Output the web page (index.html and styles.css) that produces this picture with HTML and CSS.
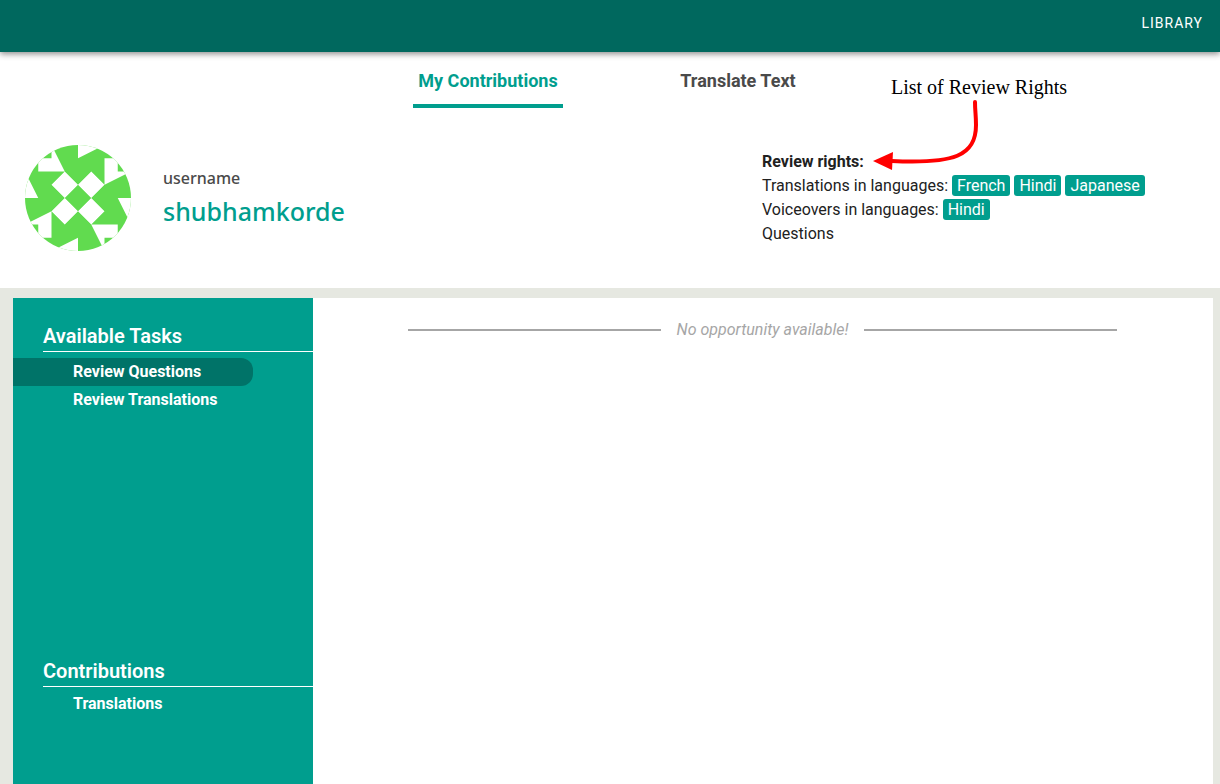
FILE: index.html
```html
<!DOCTYPE html>
<html lang="en">
<head>
<meta charset="utf-8">
<title>Contributor Dashboard</title>
<link rel="stylesheet" href="styles.css">
</head>
<body>
<header class="navbar"><a class="nav-link" href="#">LIBRARY</a></header>
<section class="top">
  <nav class="tabs">
    <button class="tab tab-active" type="button">My Contributions</button>
    <button class="tab" type="button">Translate Text</button>
  </nav>
  <div class="profile">
    <svg class="avatar" viewBox="0 0 16 16" role="img" aria-label="Profile picture">
      <defs><clipPath id="disc"><circle cx="8" cy="8" r="8"/></clipPath></defs>
      <g clip-path="url(#disc)">
        <path fill="#61db4f" d="M0 0H16V16H0Z"/>
        <path fill="#fff" d="M2 2H4V4H2ZM12 2H14V4H12ZM12 12H14V14H12ZM2 12H4V14H2ZM4 0L6 4H4ZM8 0V2L12 0ZM16 4L12 6V4ZM16 8H14L16 12ZM12 16L10 12H12ZM8 16V14L4 16ZM0 12L4 10V12ZM0 8H2L0 4ZM6 4L8 6L6 8L4 6ZM10 4L12 6L10 8L8 6ZM6 8L8 10L6 12L4 10ZM10 8L12 10L10 12L8 10Z"/>
      </g>
    </svg>
    <div class="identity">
      <span class="label">username</span>
      <h1 class="name">shubhamkorde</h1>
    </div>
    <div class="rights">
      <strong>Review rights:</strong>
      <div>Translations in languages: <span class="tag">French</span> <span class="tag">Hindi</span> <span class="tag">Japanese</span></div>
      <div>Voiceovers in languages: <span class="tag">Hindi</span></div>
      <div>Questions</div>
      <div class="note">
        <span class="note-text">List of Review Rights</span>
        <svg class="arrow" viewBox="0 0 108 74" aria-hidden="true">
          <path d="M102 3C102 12 103 16 103 26C103 57 81 65 19 62" fill="none" stroke="#f00" stroke-width="4" stroke-linecap="round"/>
          <path d="M0 62L20 53L19 71Z" fill="#f00"/>
        </svg>
      </div>
    </div>
  </div>
</section>
<main class="board">
  <aside class="sidebar">
    <section class="group">
      <h2 class="group-title">Available Tasks</h2>
      <button class="task task-active" type="button">Review Questions</button>
      <button class="task" type="button">Review Translations</button>
    </section>
    <section class="group">
      <h2 class="group-title">Contributions</h2>
      <button class="task" type="button">Translations</button>
    </section>
  </aside>
  <section class="content">
    <p class="empty">No opportunity available!</p>
  </section>
</main>
</body>
</html>
```
FILE: styles.css
```css
* { box-sizing: border-box; }
body {
  margin: 0;
  min-height: 100vh;
  display: flex;
  flex-direction: column;
  background: #e6e8e1;
  color: #212121;
  font: 16px/24px Roboto, sans-serif;
}
button { border: 0; background: none; font: inherit; cursor: pointer; }
.navbar {
  position: relative;
  display: flex;
  justify-content: flex-end;
  height: 52px;
  padding: 11px 17px;
  background: #00685e;
  box-shadow: 0 2px 6px rgba(0, 0, 0, 0.45);
}
.nav-link {
  color: #fff;
  font-size: 14px;
  letter-spacing: 1px;
  text-decoration: none;
}
.top { padding: 0 8px 24px 12px; background: #fff; }
.tabs { display: flex; justify-content: center; gap: 100px; padding-left: 2px; }
.tab {
  width: 150px;
  height: 56px;
  padding: 6px 0 0;
  border-bottom: 4px solid transparent;
  color: #4a4a4a;
  font-size: 18px;
  font-weight: 700;
  white-space: nowrap;
}
.tab-active { border-color: #009e8e; color: #009e8e; }
.profile {
  display: grid;
  grid-template-columns: 106px 1fr 450px;
  column-gap: 32px;
  padding: 37px 0 0 13px;
}
.avatar { width: 106px; height: 106px; }
.identity { padding-top: 21px; }
.label { color: #4a4a4a; font: 500 16px/24px "Noto Sans", sans-serif; }
.name {
  margin: 2px 0 0;
  color: #009e8e;
  font: 500 25px/36px "Noto Sans", sans-serif;
}
.rights { position: relative; padding: 5px 0 18px; }
.tag {
  padding: 1px 5px;
  border-radius: 3px;
  background: #009e8e;
  color: #fff;
}
.note { position: absolute; top: -70px; left: 111px; }
.note-text {
  display: block;
  padding-left: 18px;
  color: #000;
  font: 20px/24px "Liberation Serif", serif;
  white-space: nowrap;
}
.arrow { display: block; width: 108px; height: 74px; }
.board { flex: 1; display: flex; padding: 10px 7px 0 13px; }
.sidebar { width: 300px; padding-top: 24px; background: #009e8e; color: #fff; }
.group { min-height: 335px; }
.group + .group { min-height: 120px; }
.group-title {
  margin: 0 0 6px 30px;
  padding-bottom: 1px;
  border-bottom: 1px solid #fff;
  font-size: 20px;
  line-height: 28px;
  font-weight: 600;
}
.group + .group .group-title { margin-bottom: 3px; }
.task {
  display: block;
  width: 240px;
  height: 28px;
  padding: 0 0 0 60px;
  border-radius: 0 12px 12px 0;
  color: #fff;
  font-weight: 700;
  text-align: left;
}
.task-active { background: #007368; }
.content { flex: 1; padding: 20px 96px 0 95px; background: #fff; }
.empty {
  display: flex;
  align-items: center;
  gap: 16px;
  margin: 0;
  color: #a6a6a6;
  font-style: italic;
}
.empty::before, .empty::after { content: ""; flex: 1; height: 2px; background: #a6a6a6; }
```
